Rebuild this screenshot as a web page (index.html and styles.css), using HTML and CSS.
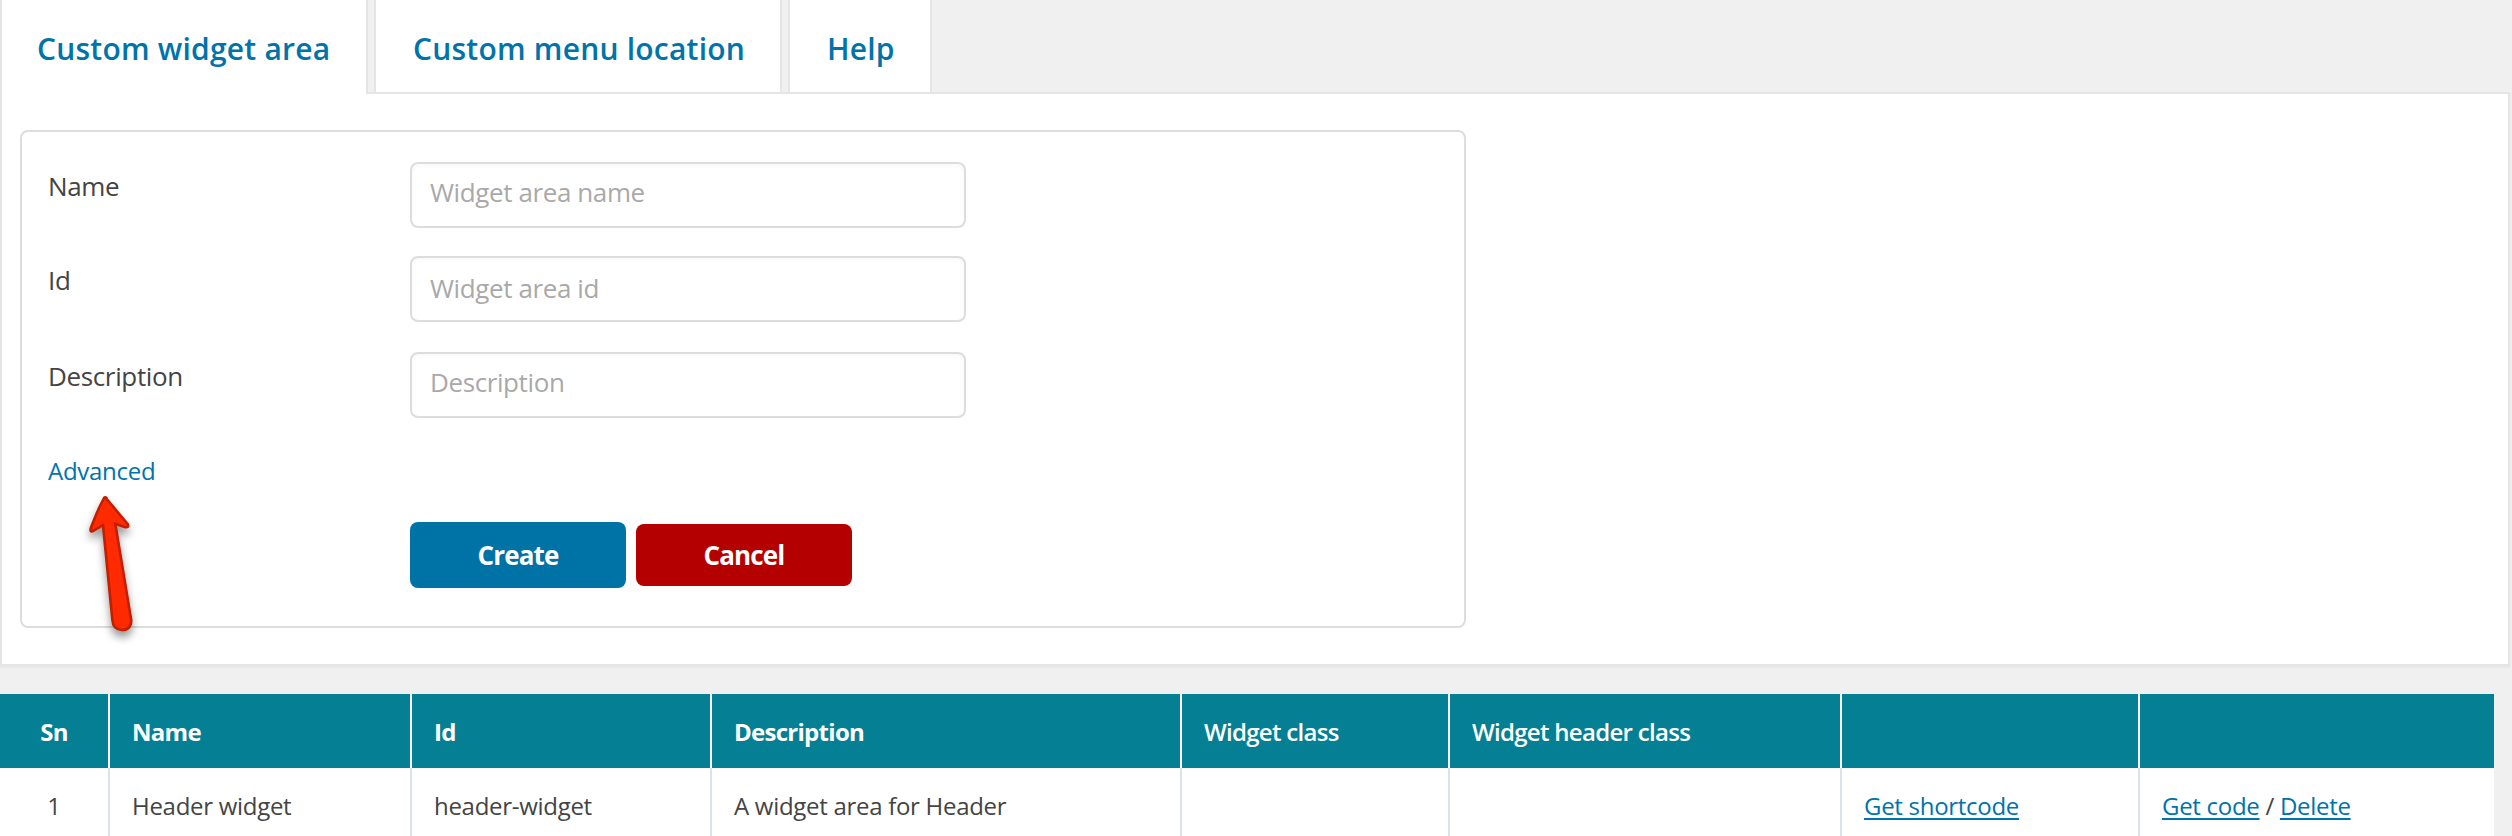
FILE: index.html
```html
<!DOCTYPE html>
<html lang="en">
<head>
<meta charset="utf-8">
<title>Custom widget area</title>
<link rel="stylesheet" href="styles.css">
</head>
<body>
<nav class="tabs">
  <a class="tab tab-active">Custom widget area</a>
  <a class="tab">Custom menu location</a>
  <a class="tab">Help</a>
</nav>
<main class="panel">
  <form class="card">
    <div class="row row-name">
      <label class="label" for="name">Name</label>
      <input class="field field-name" id="name" type="text" placeholder="Widget area name">
    </div>
    <div class="row row-id">
      <label class="label" for="area-id">Id</label>
      <input class="field" id="area-id" type="text" placeholder="Widget area id">
    </div>
    <div class="row row-description">
      <label class="label" for="description">Description</label>
      <input class="field field-description" id="description" type="text" placeholder="Description">
    </div>
    <a class="advanced">Advanced</a>
    <div class="actions">
      <button class="button button-create" type="button">Create</button>
      <button class="button button-cancel" type="button">Cancel</button>
    </div>
    <svg class="arrow" width="70" height="160" viewBox="75 485 70 160">
      <path d="M105.5 497.5 L127.7 524 Q129.5 528 124.500 527 L115.300 523.700 L131.200 620 Q131.500 630 121.700 630 Q113 629.500 112.400 620 L103 525 L92.500 531.300 Q89.500 532 91 527.500 Q96 513 104 498 Q105 496.500 106.500 498 Z"/>
    </svg>
  </form>
</main>
<table class="areas">
  <colgroup>
    <col class="col-sn"><col class="col-name"><col class="col-id"><col class="col-description">
    <col class="col-class"><col class="col-header-class"><col class="col-shortcode"><col class="col-code">
  </colgroup>
  <thead>
    <tr>
      <th class="sn">Sn</th><th>Name</th><th>Id</th><th>Description</th>
      <th class="semi">Widget class</th><th class="semi">Widget header class</th><th></th><th></th>
    </tr>
  </thead>
  <tbody>
    <tr>
      <td class="sn">1</td><td>Header widget</td><td>header-widget</td><td>A widget area for Header</td>
      <td></td><td></td><td><a class="link">Get shortcode</a></td><td><a class="link">Get code</a> / <a class="link">Delete</a></td>
    </tr>
  </tbody>
</table>
</body>
</html>
```
FILE: styles.css
```css
* { box-sizing: border-box; }
body {
  margin: 0;
  height: 836px;
  overflow: hidden;
  background: #f0f0f0;
  color: #444;
  font-family: "Open Sans", sans-serif;
  font-size: 24px;
}
.tabs { display: flex; gap: 6px; height: 92px; }
.tab {
  height: 92px;
  padding: 28px 0 0 37px;
  border: solid #e5e5e5;
  border-width: 0 2px;
  background: #fff;
  color: #0073aa;
  font-size: 30px;
  font-weight: 600;
  letter-spacing: .22px;
  line-height: 42px;
  white-space: nowrap;
}
.tab-active { width: 368px; height: 94px; z-index: 1; padding-left: 35px; }
.tab:nth-child(2) { width: 408px; }
.tab:nth-child(3) { width: 144px; }
.panel {
  width: 2510px;
  height: 574px;
  padding: 36px 18px;
  border: 2px solid #e5e5e5;
  background: #fff;
  box-shadow: 0 2px 2px rgba(0, 0, 0, .04);
}
.card {
  position: relative;
  width: 1446px;
  height: 498px;
  padding: 30px 26px;
  border: 2px solid #ddd;
  border-radius: 8px;
}
.row { display: flex; align-items: flex-start; margin-bottom: 28px; }
.row-id { margin-bottom: 30px; }
.label { width: 362px; padding-top: 6px; font-size: 26px; letter-spacing: -.36px; line-height: 36px; }
.field {
  width: 556px;
  height: 66px;
  padding: 0 18px 3px;
  border: 2px solid #ddd;
  border-radius: 8px;
  background: #fff;
  box-shadow: inset 0 2px 4px rgba(0, 0, 0, .03);
  font: 26px "Open Sans", sans-serif;
  letter-spacing: -.4px;
}
.field::placeholder { color: #a9a9a9; opacity: 1; }
.field-name { padding-bottom: 6px; }
.field-description { padding-bottom: 6px; }
.advanced { display: block; margin-top: 36px; color: #0073aa; letter-spacing: -.28px; line-height: 34px; }
.actions { display: flex; align-items: center; gap: 10px; margin: 34px 0 0 362px; }
.button {
  width: 216px;
  padding: 0;
  border: 0;
  border-radius: 8px;
  color: #fff;
  font: 700 26px "Open Sans", sans-serif;
  letter-spacing: -.85px;
}
.button-create { height: 66px; background: #0073a6; }
.button-cancel { height: 62px; background: #b50000; }
.arrow {
  position: absolute;
  left: 53px;
  top: 353px;
  fill: #ff2a00;
  stroke: #c41e00;
  stroke-width: 2.6px;
  stroke-linejoin: round;
  filter: drop-shadow(0 6px 4px rgba(0, 0, 0, .4));
}
.areas {
  width: 2494px;
  margin-top: 28px;
  border-spacing: 0;
  table-layout: fixed;
  background: #fff;
}
.col-sn { width: 108px; }
.col-name { width: 302px; }
.col-id { width: 300px; }
.col-description { width: 470px; }
.col-class { width: 268px; }
.col-header-class { width: 392px; }
.col-shortcode { width: 298px; }
.col-code { width: 356px; }
th, td {
  height: 74px;
  padding: 0 0 0 22px;
  border-left: 2px solid #d9e4e6;
  letter-spacing: -.29px;
  text-align: left;
  white-space: nowrap;
}
th { border-color: #fff; background: #057f93; color: #fff; font-weight: 700; letter-spacing: -.72px; }
.semi { font-weight: 600; letter-spacing: -.7px; }
.sn { padding: 0; border-left: 0; text-align: center; }
.link { color: #0073aa; text-decoration: underline; text-decoration-thickness: 2px; text-underline-offset: 3px; }
```
